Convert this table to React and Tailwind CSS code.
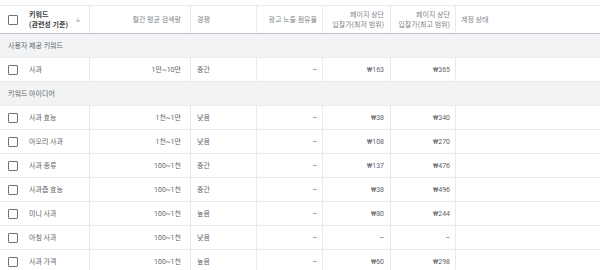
import { HiArrowDown } from "react-icons/hi";

const rows = [
  ["사과 효능", "1천~1만", "낮음", "–", "₩38", "₩340"],
  ["아오리 사과", "1천~1만", "낮음", "–", "₩108", "₩270"],
  ["사과 종류", "100~1천", "중간", "–", "₩137", "₩476"],
  ["사과즙 효능", "100~1천", "중간", "–", "₩38", "₩496"],
  ["미니 사과", "100~1천", "높음", "–", "₩80", "₩244"],
  ["아침 사과", "100~1천", "낮음", "–", "–", "–"],
  ["사과 가격", "100~1천", "높음", "–", "₩60", "₩298"],
];

const Checkbox = () => (
  <span className="block w-[10px] h-[10px] border-[1.5px] border-[#6f7378] rounded-[1px] bg-white shrink-0" />
);

const Row = ({ item }) => (
  <div className="flex h-[24px] border-b border-[#e8eaed] text-[#5f6368]">
    <div className="w-[90px] flex items-center pl-[8px] border-r border-[#e8eaed]">
      <Checkbox />
      <span className="ml-[11px]">{item[0]}</span>
    </div>
    <div className="w-[101px] flex items-center justify-end pr-[9px] border-r border-[#e8eaed]">{item[1]}</div>
    <div className="w-[66px] flex items-center pl-[6px] border-r border-[#e8eaed]">{item[2]}</div>
    <div className="w-[66px] flex items-center justify-end pr-[5px] border-r border-[#e8eaed]">{item[3]}</div>
    <div className="w-[68px] flex items-center justify-end pr-[6px] border-r border-[#e8eaed]">{item[4]}</div>
    <div className="w-[65px] flex items-center justify-end pr-[5px] border-r border-[#e8eaed]">{item[5]}</div>
    <div className="flex-1" />
  </div>
);

const GroupRow = ({ label }) => (
  <div className="flex items-center h-[24px] pl-[8px] bg-[#f1f3f4] border-b border-[#e8eaed] text-[#5f6368]">
    {label}
  </div>
);

export default function App() {
  return (
    <div className="w-[600px] h-[270px] overflow-hidden bg-white pt-[5px] font-['Roboto','Noto_Sans_CJK_KR',sans-serif] text-[7px] leading-[10px]">
      <div className="flex h-[29px] border-t border-[#e8eaed] border-b border-b-[#bdc1c6] text-[#80868b]">
        <div className="w-[90px] flex items-center pl-[8px] border-r border-[#e8eaed]">
          <Checkbox />
          <div className="ml-[11px] font-bold text-[#3c4043]">
            <div>키워드</div>
            <div>(관련성 기준)</div>
          </div>
          <HiArrowDown className="ml-[7px] w-[6px] h-[6px] text-[#9aa0a6]" />
        </div>
        <div className="w-[101px] flex items-center justify-end pr-[9px] border-r border-[#e8eaed]">월간 평균 검색량</div>
        <div className="w-[66px] flex items-center pl-[6px] border-r border-[#e8eaed]">경쟁</div>
        <div className="w-[66px] flex items-center justify-end pr-[5px] border-r border-[#e8eaed]">광고 노출 점유율</div>
        <div className="w-[68px] flex flex-col justify-center items-end pr-[6px] border-r border-[#e8eaed]">
          <div>페이지 상단</div>
          <div>입찰가(최저 범위)</div>
        </div>
        <div className="w-[65px] flex flex-col justify-center items-end pr-[5px] border-r border-[#e8eaed]">
          <div>페이지 상단</div>
          <div>입찰가(최고 범위)</div>
        </div>
        <div className="flex-1 flex items-center pl-[5px]">계정 상태</div>
      </div>
      <GroupRow label="사용자 제공 키워드" />
      <Row item={["사과", "1만~10만", "중간", "–", "₩163", "₩365"]} />
      <GroupRow label="키워드 아이디어" />
      {rows.map((item) => (
        <Row key={item[0]} item={item} />
      ))}
    </div>
  );
}
